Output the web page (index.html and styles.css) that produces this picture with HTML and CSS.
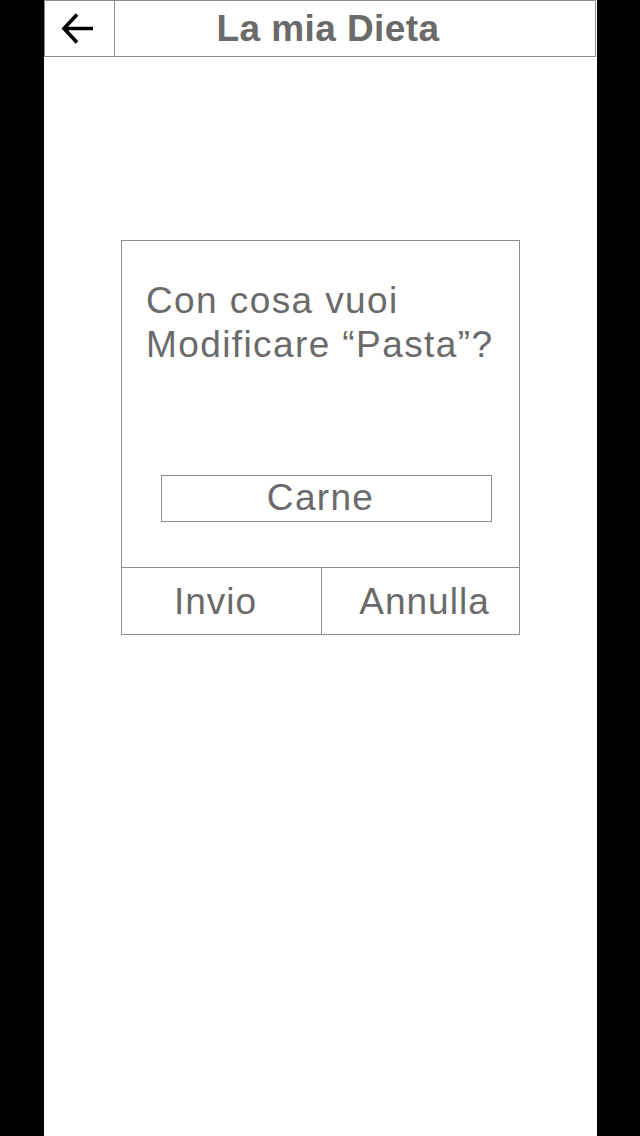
FILE: index.html
```
<!DOCTYPE html>
<html lang="it">
<head>
<meta charset="utf-8">
<title>La mia Dieta</title>
<link rel="stylesheet" href="styles.css">
</head>
<body>
<div class="screen">
  <header class="topbar">
    <div class="back">
      <svg width="34" height="34" viewBox="0 0 34 34" aria-hidden="true">
        <path d="M32 16.5H4 M16 2.5L3 16.5L16 30.5" fill="none" stroke="#000" stroke-width="3.6"/>
      </svg>
    </div>
    <h1 class="title">La mia Dieta</h1>
  </header>
  <div class="dialog">
    <div class="dialog-body">
      <p class="question">Con cosa vuoi<br>Modificare “Pasta”?</p>
      <div class="field">Carne</div>
    </div>
    <div class="actions">
      <div class="btn btn-send">Invio</div>
      <div class="btn btn-cancel">Annulla</div>
    </div>
  </div>
</div>
</body>
</html>
```
FILE: styles.css
```
html, body {
  margin: 0;
  padding: 0;
  background: #000;
}
body {
  font-family: "Liberation Sans", Arial, sans-serif;
  color: #6a6a6a;
}
.screen {
  width: 553px;
  min-height: 1136px;
  margin-left: 44px;
  background: #fff;
  display: flex;
  flex-direction: column;
}
.topbar {
  box-sizing: border-box;
  width: 552px;
  height: 57px;
  border: 1px solid #8c8c8c;
  display: flex;
}
.back {
  box-sizing: border-box;
  width: 70px;
  border-right: 1px solid #8c8c8c;
  display: flex;
  align-items: center;
  justify-content: center;
  padding-right: 4px;
}
.title {
  flex: 1;
  margin: 0;
  text-align: center;
  font-size: 37px;
  font-weight: bold;
  letter-spacing: 0.4px;
  line-height: 56px;
  color: #6a6a6a;
  padding-right: 54px;
}
.dialog {
  box-sizing: border-box;
  width: 399px;
  height: 395px;
  margin: 183px 0 0 77px;
  border: 1px solid #8c8c8c;
  display: flex;
  flex-direction: column;
}
.dialog-body {
  flex: 1;
  padding: 38px 0 0 24px;
}
.question {
  margin: 0;
  font-size: 37px;
  line-height: 44px;
  letter-spacing: 1.4px;
}
.field {
  box-sizing: border-box;
  width: 331px;
  height: 47px;
  margin: 108px 0 0 15px;
  border: 1px solid #8c8c8c;
  text-align: center;
  font-size: 37px;
  line-height: 43px;
  letter-spacing: 1.3px;
  padding-right: 12px;
}
.actions {
  height: 66px;
  border-top: 1px solid #8c8c8c;
  display: flex;
}
.btn {
  box-sizing: border-box;
  text-align: center;
  font-size: 37px;
  line-height: 68px;
  letter-spacing: 1px;
}
.btn-send {
  width: 200px;
  border-right: 1px solid #8c8c8c;
  padding-right: 12px;
}
.btn-cancel {
  flex: 1;
  padding-left: 8px;
}
```
